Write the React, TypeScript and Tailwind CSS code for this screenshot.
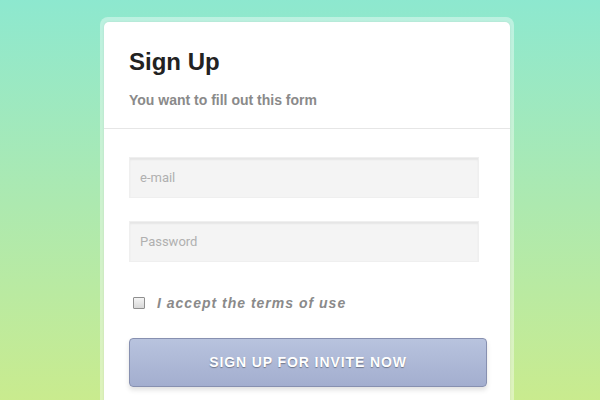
import React from "react";

export default function App() {
  return (
    <div className="w-[600px] h-[400px] overflow-hidden bg-gradient-to-b from-[#8de8cf] via-[#ace9b0] to-[#c9eb8e] flex justify-center pt-[17px] pl-[14px]">
      <div className="w-[414px] h-[420px] shrink-0 rounded-[8px] bg-white/40 p-[4px] pt-[5px]">
        <div className="h-full rounded-[5px] bg-white shadow-[0_0_3px_rgba(0,0,0,0.08)]" style={{ fontFamily: '"Liberation Sans", Arial, sans-serif' }}>
          <div className="pl-[25px] pt-[26px] pb-[20px] border-b border-[#e6e6e6]">
            <h1 className="text-[24px] leading-[28px] font-bold text-[#222]">Sign Up</h1>
            <p className="mt-[16px] text-[14px] leading-[16px] font-bold text-[#8a8a8a]">You want to fill out this form</p>
          </div>
          <div className="pl-[25px] pt-[28px] flex flex-col">
            <div className="w-[350px] h-[41px] bg-[#f4f4f4] shadow-[inset_0_2px_2px_rgba(0,0,0,0.06)] border border-[#efefef] flex items-center pl-[10px]">
              <span className="text-[13px] text-[#b0b0b0]" style={{ fontFamily: 'Roboto, "Liberation Sans", sans-serif' }}>e-mail</span>
            </div>
            <div className="mt-[23px] w-[350px] h-[41px] bg-[#f4f4f4] shadow-[inset_0_2px_2px_rgba(0,0,0,0.06)] border border-[#efefef] flex items-center pl-[10px]">
              <span className="text-[13px] text-[#b0b0b0]" style={{ fontFamily: 'Roboto, "Liberation Sans", sans-serif' }}>Password</span>
            </div>
            <div className="mt-[33px] flex items-center pl-[4px] h-[16px]">
              <span className="w-[12px] h-[12px] border border-[#8f8f8f] bg-gradient-to-b from-[#f4f4f4] to-[#d8d8d8] rounded-[1px]"></span>
              <span className="ml-[12px] text-[14px] font-bold italic tracking-[1px] text-[#8a8a8a]">I accept the terms of use</span>
            </div>
            <div className="mt-[27px] w-[358px] h-[49px] rounded-[4px] border border-[#8790b0] bg-gradient-to-b from-[#b8c3de] to-[#a3aecf] shadow-[0_3px_5px_rgba(0,0,0,0.12)] flex items-center justify-center">
              <span className="text-[14px] font-bold uppercase tracking-[0.9px] text-white [text-shadow:0_1px_1px_rgba(0,0,0,0.35)]">Sign up for invite now</span>
            </div>
          </div>
        </div>
      </div>
    </div>
  );
}
